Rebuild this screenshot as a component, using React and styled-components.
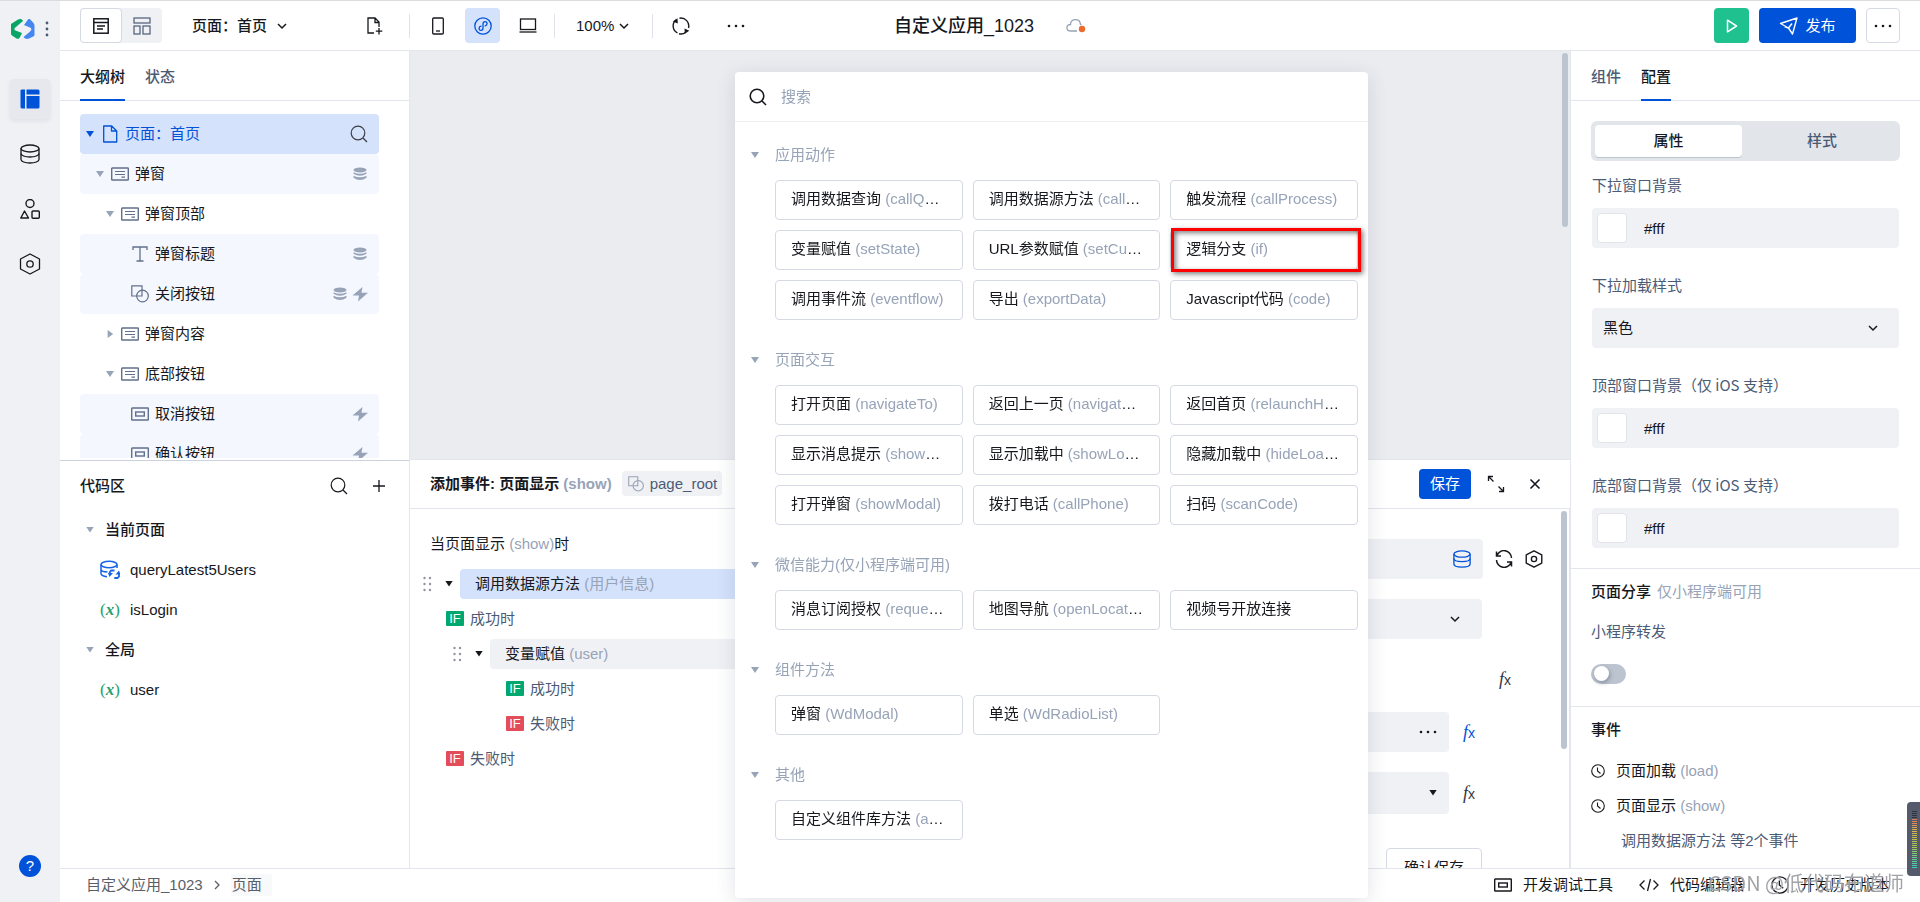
import React from "react";
import styled, { createGlobalStyle } from "styled-components";

const c = {
  blue: "#0052d9",
  blueSoft: "#d4e2fc",
  ink: "#16181d",
  slate: "#4b5b76",
  muted: "#97a3b7",
  field: "#f0f1f5",
  line: "#e3e6ec",
  outline: "#d5d9e3",
  thumb: "#bcc4d0",
  green: "#00a870",
  red: "#e34d59",
};

const Global = createGlobalStyle`
  *, *::before, *::after { box-sizing: border-box; }
  body {
    margin: 0;
    background: #fff;
    color: ${c.ink};
    font: 15px/20px "Liberation Sans", "Noto Sans CJK SC", sans-serif;
    overflow: hidden;
  }
  button, input, select { font: inherit; color: inherit; }
  button { background: none; border: 0; padding: 0; cursor: pointer; }
  svg { display: block; flex: none; }
`;

/* ---------- icons ---------- */

const Svg = ({ w = 18, h, box, sw = 1.2, children, ...rest }) => (
  <svg
    width={w}
    height={h || w}
    viewBox={box || `0 0 ${w} ${h || w}`}
    fill="none"
    stroke="currentColor"
    strokeWidth={sw}
    aria-hidden="true"
    {...rest}
  >
    {children}
  </svg>
);

const Logo = () => (
  <Svg w={24} h={20} stroke="none">
    <path d="M0 5 7 .6c2-1 4-.6 5 1.400L5.500 7.500c-2 1.500-3 3-1 4L11 14l-2.500 5c-1 1-2 1-3 .5L1 16.500c-1-.8-1-1.500-1-2.500z" fill="#07a566" />
    <path d="M13 6l4-5.500c1-.8 2-.6 2.800.4L22.500 4c.8 1 1 2 1 3v8.500c0 1-.4 1.500-1.200 2L18 19.500c-2 .8-4 .4-5.500-1.500l6-5c2-1.500 2.500-3 1-4.200z" fill="#4687ef" />
  </Svg>
);
const VDots = () => (
  <Svg w={4} h={16} stroke="none" fill="#4b5b76">
    <circle cx="2" cy="2" r="1.400" /><circle cx="2" cy="8" r="1.400" /><circle cx="2" cy="14" r="1.400" />
  </Svg>
);
const LayoutIcon = () => (
  <Svg w={20} stroke="none" fill={c.blue}>
    <path d="M1.500 .5H5v19H2a1.500 1.500 0 0 1-1.500-1.500V1.500z" />
    <path d="M6.500.5H18a1.500 1.500 0 0 1 1.500 1.500v3.500h-13z" />
    <path d="M6.500 7h13v11a1.500 1.500 0 0 1-1.500 1.500H6.500z" />
  </Svg>
);
const Database = ({ w = 20 }) => (
  <Svg w={w} box="0 0 20 20" sw={20 / w * 1.3}>
    <ellipse cx="10" cy="4.500" rx="9" ry="3.500" />
    <path d="M1 4.500V15.500C1 17.500 5 19 10 19s9-1.500 9-3.500V4.500" />
    <path d="M1 9.500c0 2 4 3.500 9 3.500s9-1.500 9-3.500" />
  </Svg>
);
const Shapes = () => (
  <Svg w={20} h={20} sw={1.400}>
    <circle cx="10" cy="4.500" r="4" />
    <path d="M4.500 12 8.500 19H.8z" strokeLinejoin="round" />
    <rect x="12" y="12" width="7.300" height="7.300" rx="1" />
  </Svg>
);
const Hexagon = ({ w = 22, sw = 1.3, r = 3.2 }) => (
  <Svg w={w} box="0 0 22 22" sw={sw}>
    <path d="M11 1 20.500 6v10L11 21l-9.500-5V6z" strokeLinejoin="round" />
    <circle cx="11" cy="11" r={r} />
  </Svg>
);
const ListIcon = () => (
  <Svg w={16} h={16} sw={1.500}>
    <rect x=".8" y=".8" width="14.400" height="14.400" />
    <path d="M1 4.500h14M4 8h8M4 11h6" />
  </Svg>
);
const BlocksIcon = () => (
  <Svg w={18}>
    <rect x="1" y="1" width="16" height="5" /><rect x="1" y="9" width="6" height="8" /><rect x="10" y="9" width="7" height="8" />
  </Svg>
);
const Chevron = ({ w = 10 }) => (
  <Svg w={w} box="0 0 10 10" sw={1.500}><path d="M1 3l4 4 4-4" /></Svg>
);
const NewFile = () => (
  <Svg w={18} sw={1.300}>
    <path d="M8 16H2V1h7l4 4v5M9 1v4.500h4M13 11v6.500M9.800 14.200h6.500" />
  </Svg>
);
const Phone = () => (
  <Svg w={12} h={18} sw={1.300}><rect x=".7" y="1" width="10.600" height="16" rx="1" /><path d="M4 14h4" /></Svg>
);
const Mini = () => (
  <Svg w={18} sw={1.300}>
    <circle cx="9" cy="9" r="8.200" />
    <path d="M7 9.200c-2.200.2-2.800 4.300 0 4.200 1.500-.1 2-1 2-2.400V7c0-1.600.8-2.400 2-2.400 2.900 0 2.500 3.900.2 4.200" strokeLinecap="round" />
  </Svg>
);
const Laptop = () => (
  <Svg w={18} h={16} sw={1.300}><rect x="1.500" y="1" width="15" height="10.500" /><path d="M.5 14h17" /></Svg>
);
const Rotate = () => (
  <Svg w={18} sw={1.400}>
    <path d="M5.500 16A7.900 7.900 0 0 1 4.500 2.500M7.500 1.200A7.900 7.900 0 0 1 16.500 11M14 15A7.900 7.900 0 0 1 7 16.800" />
    <path d="M5.800 6.500 5.500 1.200.8 4.500zM12.500 11.500l.3 5.300 4.500-3z" fill="currentColor" stroke="none" />
  </Svg>
);
const Dots = () => (
  <Svg w={18} h={4} stroke="none" fill="currentColor">
    <circle cx="2" cy="2" r="1.300" /><circle cx="9" cy="2" r="1.300" /><circle cx="16" cy="2" r="1.300" />
  </Svg>
);
const Cloud = () => (
  <Svg w={20} h={16} stroke={c.muted} sw={1.300}>
    <path d="M11 13H5C-.5 13-.4 6.500 4.500 6.500 4.500 0 14 0 14.500 6.500h1" />
    <circle cx="16" cy="11" r="3.200" fill="#ed6b2f" stroke="none" />
  </Svg>
);
const Play = () => (
  <Svg w={12} h={14} sw={1.500}><path d="M1.500 1.200 10.500 7l-9 5.800z" strokeLinejoin="round" /></Svg>
);
const Plane = () => (
  <Svg w={20} h={18} sw={1.400}>
    <path d="M1.500 6.500 18 1l-4.500 16-4-6zM9.500 11l3.500-4.500M9.500 11 5.500 9.500" strokeLinejoin="round" />
  </Svg>
);
const Search = ({ w = 18, sw = 1.400 }) => (
  <Svg w={w} box="0 0 18 18" sw={sw}><circle cx="8" cy="8" r="6.800" /><path d="M13 13l4 4" /></Svg>
);
const Doc = () => (
  <Svg w={18} sw={1.300}><path d="M2.700 1h8l5 5v11h-13zM10.500 1v5h5" strokeLinejoin="round" /></Svg>
);
const Card = () => (
  <Svg w={18} h={14} sw={1.400}>
    <rect x=".7" y="1" width="16.600" height="12" rx=".5" />
    <path d="M4 4.500h10M4 7.500h10M10.500 10.200H14" strokeWidth="1.200" />
  </Svg>
);
const Tee = () => (
  <Svg w={18} h={16} sw={1.300}><path d="M2 4V1h14v3M9 1v14M5.500 15h7" /></Svg>
);
const Overlap = ({ w = 18 }) => (
  <Svg w={w} box="0 0 18 18" sw={1.200}><path d="M7 11H.8V.8H11V6" /><circle cx="11.500" cy="11" r="5.800" /><path d="M7 11h4V6" /></Svg>
);
const Btn = () => (
  <Svg w={18} h={14} sw={1.400}><rect x=".7" y="1" width="16.600" height="12" rx=".5" /><rect x="4.700" y="5" width="8.600" height="4" /></Svg>
);
const Stack = () => (
  <Svg w={16} stroke="none" fill={c.muted}>
    <ellipse cx="8" cy="4" rx="6.500" ry="2.500" />
    <path d="M1.500 6.200q6.500 3 13 0v1.600q-6.500 4-13 0zM1.500 9.800q6.500 3 13 0v2q-6.500 4.400-13 0z" />
  </Svg>
);
const Bolt = () => (
  <Svg w={16} stroke="none" fill={c.muted}><path d="M10.500 1 .5 9.500H7L6 15.500l10-8.800H9.500z" /></Svg>
);
const Plus = () => <Svg w={12} sw={1.300}><path d="M6 0v12M0 6h12" /></Svg>;
const Query = () => (
  <Svg w={20} stroke="#1763e6" sw={1.500}>
    <ellipse cx="9" cy="4.500" rx="8" ry="3.200" />
    <path d="M1 4.500v9c0 1.500 2 2.700 6 3.200M17 4.500V8M1 9c0 1.800 3 3 6.500 3" />
    <path d="M9.800 14.500v-2.300l1.500-1.700h3.200M19 13.500v3L17.500 18h-3.200" strokeWidth="1.800" />
    <path d="M8 13h5l-3.500 4zM20.500 14.500h-5l3.500-4z" fill="#1763e6" stroke="none" />
  </Svg>
);
const Expand = () => (
  <Svg w={18} sw={1.300}><path d="M1.500 6V1.500H6M1.500 1.500l5 5M16.500 12v4.500H12M16.500 16.500l-5-5" /></Svg>
);
const Close = () => <Svg w={12} sw={1.600}><path d="M1.500 1.500l9 9M10.500 1.500l-9 9" /></Svg>;
const Sync = () => (
  <Svg w={18} sw={1.500}>
    <path d="M1.500 1.500V6H6M1.800 6A7.500 7.500 0 0 1 16.500 8M16.500 16.500V12H12M16.200 12A7.500 7.500 0 0 1 1.500 10" />
  </Svg>
);
const Clock = ({ w = 14 }) => (
  <Svg w={w} box="0 0 14 14" sw={1.100}><circle cx="7" cy="7" r="6.300" /><path d="M6.500 3.500V7l3 2.500" /></Svg>
);
const Code = () => (
  <Svg w={20} h={14} sw={1.300}><path d="M5.500 2.500 1 7l4.500 4.500M14.500 2.500 19 7l-4.500 4.500M11.500 1l-3 12" /></Svg>
);
const Grip = () => (
  <Svg w={9} h={16} stroke="none" fill="#8f949e">
    {[2, 8, 14].map((y) => (
      <React.Fragment key={y}><circle cx="1.500" cy={y} r="1.200" /><circle cx="7" cy={y} r="1.200" /></React.Fragment>
    ))}
  </Svg>
);
const Right = () => <Svg w={8} h={10} sw={1.300}><path d="M2 1l4 4-4 4" /></Svg>;

const Caret = styled.span`
  flex: none;
  width: 8px;
  height: 6px;
  background: ${(p) => p.$color || c.muted};
  clip-path: polygon(0 0, 100% 0, 50% 100%);
  visibility: ${(p) => (p.$hidden ? "hidden" : "visible")};
  ${(p) => p.$closed && "height: 8px; clip-path: polygon(20% 0, 90% 50%, 20% 100%);"}
`;

/* ---------- frame ---------- */

const Page = styled.div`
  display: grid;
  grid-template-columns: 60px minmax(0, 1fr);
  height: 100vh;
  border-top: 1px solid #dcdcdc;
`;
const Rail = styled.nav`
  display: flex;
  flex-direction: column;
  align-items: center;
  background: ${c.field};
  padding: 18px 0 25px;
`;
const Brand = styled.div`
  display: flex;
  align-items: center;
  gap: 10px;
  height: 20px;
  margin-bottom: 40px;
`;
const RailButton = styled.button`
  display: grid;
  place-items: center;
  width: 40px;
  height: 40px;
  margin-bottom: 15px;
  border-radius: 4px;
  background: ${(p) => (p.$on ? "#e6e8ed" : "transparent")};
  box-shadow: ${(p) => (p.$on ? "0 2px 4px rgba(30, 40, 60, .08)" : "none")};
`;
const Help = styled.button`
  margin-top: auto;
  width: 22px;
  height: 22px;
  border-radius: 50%;
  background: ${c.blue};
  color: #fff;
`;
const Main = styled.div`
  display: grid;
  grid-template-rows: 50px minmax(0, 1fr) 34px;
  min-width: 0;
  min-height: 0;
`;
const Header = styled.header`
  display: grid;
  grid-template-columns: 1fr auto 1fr;
  align-items: center;
  padding: 0 20px;
  border-bottom: 1px solid ${c.line};
`;
const Group = styled.div`
  display: flex;
  align-items: center;
  gap: ${(p) => p.$gap || 0}px;
  justify-content: ${(p) => (p.$end ? "flex-end" : "flex-start")};
`;
const Views = styled.div`
  display: flex;
  background: ${c.field};
  border-radius: 4px;
  margin-right: 30px;
`;
const View = styled.button`
  display: grid;
  place-items: center;
  width: ${(p) => (p.$on ? 42 : 40)}px;
  height: 35px;
  border-radius: 4px;
  color: ${(p) => (p.$on ? c.ink : c.slate)};
  ${(p) => p.$on && `background: #fff; border: 1px solid ${c.outline};`}
`;
const Pick = styled.button`
  display: flex;
  align-items: center;
  gap: ${(p) => p.$gap}px;
  font-weight: ${(p) => (p.$strong ? 500 : 400)};
`;
const Tool = styled.button`
  display: grid;
  place-items: center;
  width: 35px;
  height: 35px;
  border-radius: 4px;
  color: ${(p) => (p.$on ? c.blue : c.ink)};
  background: ${(p) => (p.$on ? c.blueSoft : "transparent")};
`;
const NewPage = styled(Tool)`
  margin: 0 17px 0 70px;
`;
const Devices = styled.div`
  display: flex;
  gap: 10px;
  padding: 0 9px 0 10px;
`;
const Zoom = styled.div`
  padding: 0 23px 0 21px;
`;
const Extras = styled.div`
  display: flex;
  gap: 20px;
  padding-left: 10px;
`;
const Rule = styled.span`
  width: 1px;
  height: 24px;
  background: #dfe2e9;
`;
const Title = styled.h1`
  margin: 0;
  font-size: 18px;
  line-height: 24px;
  font-weight: 500;
`;
const Solid = styled.button`
  display: flex;
  align-items: center;
  justify-content: center;
  gap: 6px;
  height: ${(p) => p.$h || 35}px;
  width: ${(p) => p.$w}px;
  border-radius: 4px;
  color: #fff;
  background: ${(p) => p.$bg || c.blue};
`;
const More = styled.button`
  display: grid;
  place-items: center;
  width: 34px;
  height: 35px;
  border: 1px solid ${c.outline};
  border-radius: 4px;
`;
const Columns = styled.div`
  display: grid;
  grid-template-columns: 350px minmax(0, 1fr) 350px;
  min-height: 0;
`;

/* ---------- shared panel parts ---------- */

const Side = styled.section`
  display: flex;
  flex-direction: column;
  min-height: 0;
  overflow: hidden;
  ${(p) => (p.$right ? `border-left: 1px solid ${c.line};` : `border-right: 1px solid ${c.line};`)}
`;
const Tabs = styled.div`
  display: flex;
  flex: none;
  gap: 20px;
  height: 50px;
  padding: 0 20px;
  border-bottom: 1px solid ${c.line};
`;
const Tab = styled.button`
  height: 50px;
  padding-top: 4px;
  font-weight: 500;
  color: ${(p) => (p.$on ? c.ink : c.slate)};
  border-bottom: 2px solid ${(p) => (p.$on ? c.blue : "transparent")};
`;
const Muted = styled.span`
  color: ${c.muted};
`;
const Thumb = styled.span`
  position: absolute;
  right: 2px;
  top: 2px;
  width: 6px;
  height: ${(p) => p.$h};
  border-radius: 3px;
  background: ${c.thumb};
`;

/* ---------- left ---------- */

const Tree = styled.div`
  flex: 1;
  min-height: 0;
  overflow: hidden;
  padding: 13px 30px 0 20px;
  margin-bottom: 2px;
`;
const TreeRow = styled.button`
  display: flex;
  align-items: center;
  width: 100%;
  height: 40px;
  padding: 0 11px 0 ${(p) => 6 + p.$level * 10}px;
  border-radius: 4px;
  background: ${(p) => (p.$root ? c.blueSoft : p.$tint ? "#f4f7fe" : "transparent")};
  color: ${(p) => (p.$root ? c.blue : c.ink)};
`;
const TreeIcon = styled.span`
  display: grid;
  place-items: center;
  width: 18px;
  margin: 0 6px 0 7px;
  color: ${(p) => (p.$root ? c.blue : "#62708a")};
`;
const Trail = styled.span`
  display: flex;
  gap: 4px;
  margin-left: auto;
  color: #3a3e46;
`;
const CodeArea = styled.div`
  flex: none;
  height: 50%;
  border-top: 1px solid #ccd2de;
`;
const CodeHead = styled.div`
  display: flex;
  align-items: center;
  height: 49px;
  padding: 2px 24px 0 20px;
`;
const Heading = styled.h2`
  margin: 0;
  margin-right: auto;
  font-size: 15px;
  font-weight: 500;
`;
const CodeRow = styled.button`
  display: flex;
  align-items: center;
  gap: ${(p) => (p.$group ? 11 : 10)}px;
  width: 100%;
  height: 40px;
  padding-left: ${(p) => (p.$group ? 26 : 40)}px;
  font-weight: ${(p) => (p.$group ? 500 : 400)};
`;
const VarMark = styled.span`
  width: 20px;
  text-align: center;
  color: #2a9f6c;
  font: 17px/20px "Liberation Serif", serif;
  white-space: nowrap;
  em { font-weight: 700; }
`;

const treeRows = [
  { level: 0, icon: <Doc />, text: "页面：首页", root: true, trail: <Search sw={1.200} /> },
  { level: 1, icon: <Card />, text: "弹窗", tint: true, trail: <Stack /> },
  { level: 2, icon: <Card />, text: "弹窗顶部" },
  { level: 3, icon: <Tee />, text: "弹窗标题", tint: true, leaf: true, trail: <Stack /> },
  { level: 3, icon: <Overlap />, text: "关闭按钮", tint: true, leaf: true, trail: <><Stack /><Bolt /></> },
  { level: 2, icon: <Card />, text: "弹窗内容", closed: true },
  { level: 2, icon: <Card />, text: "底部按钮" },
  { level: 3, icon: <Btn />, text: "取消按钮", tint: true, leaf: true, trail: <Bolt /> },
  { level: 3, icon: <Btn />, text: "确认按钮", tint: true, leaf: true, trail: <Bolt /> },
];

const Variable = () => <VarMark>(<em>x</em>)</VarMark>;

const LeftPanel = () => (
  <Side>
    <Tabs><Tab $on>大纲树</Tab><Tab>状态</Tab></Tabs>
    <Tree>
      {treeRows.map((r) => (
        <TreeRow key={r.text} $level={r.level} $root={r.root} $tint={r.tint}>
          <Caret $hidden={r.leaf} $closed={r.closed} $color={r.root ? c.blue : undefined} />
          <TreeIcon $root={r.root}>{r.icon}</TreeIcon>
          {r.text}
          <Trail>{r.trail}</Trail>
        </TreeRow>
      ))}
    </Tree>
    <CodeArea>
      <CodeHead>
        <Heading>代码区</Heading>
        <Group $gap={25}>
          <button aria-label="搜索代码"><Search sw={1.200} /></button>
          <button aria-label="新增"><Plus /></button>
        </Group>
      </CodeHead>
      <CodeRow $group><Caret />当前页面</CodeRow>
      <CodeRow><Query />queryLatest5Users</CodeRow>
      <CodeRow><Variable />isLogin</CodeRow>
      <CodeRow $group><Caret />全局</CodeRow>
      <CodeRow><Variable />user</CodeRow>
    </CodeArea>
  </Side>
);

/* ---------- center ---------- */

const Center = styled.section`
  display: flex;
  flex-direction: column;
  min-height: 0;
`;
const Canvas = styled.div`
  position: relative;
  flex: 1;
  background: #ebecf0;
`;
const EventPanel = styled.div`
  display: flex;
  flex: none;
  flex-direction: column;
  height: calc(50% + 1px);
  min-height: 0;
  border-top: 1px solid ${c.line};
`;
const EventHead = styled.div`
  display: flex;
  flex: none;
  align-items: center;
  height: 49px;
  padding: 0 29px 0 20px;
  border-bottom: 1px solid ${c.line};
`;
const EventTitle = styled.h2`
  margin: 0 10px 0 0;
  font-size: 15px;
  font-weight: 700;
`;
const EventTools = styled.div`
  display: flex;
  align-items: center;
  gap: 16px;
  margin-left: auto;
  > :last-child { margin-left: 8px; }
`;
const Tag = styled.span`
  display: flex;
  align-items: center;
  gap: 6px;
  height: 25px;
  padding: 0 5px 0 6px;
  border-radius: 4px;
  background: ${c.field};
  color: ${c.slate};
  svg { color: ${c.muted}; }
`;
const EventBody = styled.div`
  position: relative;
  display: grid;
  grid-template-columns: minmax(0, 1fr) 500px;
  flex: 1;
  min-height: 0;
  overflow: hidden;
  border-right: 1px solid ${c.line};
`;
const Flow = styled.div`
  display: flex;
  flex-direction: column;
  gap: 5px;
  padding: 20px 20px 0 0;
`;
const FlowTitle = styled.div`
  height: 30px;
  padding-left: 20px;
  margin-bottom: 5px;
  line-height: 30px;
`;
const FlowRow = styled.div`
  display: flex;
  align-items: center;
  height: 30px;
  padding-left: ${(p) => p.$pad}px;
  color: ${c.slate};
`;
const FlowBar = styled.button`
  flex: 1;
  height: 30px;
  padding-left: 15px;
  border-radius: 4px;
  text-align: left;
  color: ${c.ink};
  background: ${(p) => (p.$on ? c.blueSoft : c.field)};
`;
const FlowCaret = styled.span`
  display: flex;
  margin: 0 7px 0 13px;
`;
const If = styled.span`
  display: grid;
  place-items: center;
  width: 18px;
  height: 15px;
  margin-right: 6px;
  border-radius: 1px;
  color: #fff;
  font-size: 13px;
  line-height: 15px;
  background: ${(p) => (p.$ok ? c.green : c.red)};
`;
const Form = styled.div`
  display: flex;
  flex-direction: column;
  padding: 10px 26px 0 0;
`;
const FormRow = styled.div`
  display: flex;
  align-items: center;
  gap: 12px;
  flex: none;
  height: ${(p) => p.$h || 40}px;
  margin-top: ${(p) => p.$top || 20}px;
  padding-right: ${(p) => p.$right || 0}px;
  color: ${c.ink};
`;
const FormField = styled.button`
  display: flex;
  align-items: center;
  justify-content: flex-end;
  flex: 1;
  height: 100%;
  padding-right: ${(p) => p.$pr || 12}px;
  border-radius: 4px;
  background: ${c.field};
  color: ${(p) => (p.$blue ? c.blue : c.ink)};
`;
const FxButton = styled.button`
  width: 16px;
  height: 20px;
  color: ${(p) => (p.$on ? c.blue : "#33373f")};
  font: italic 18px/20px "Liberation Serif", serif;
  white-space: nowrap;
  small { font: 14px/20px "Liberation Sans", sans-serif; }
`;
const Outline = styled.button`
  width: 96px;
  height: 40px;
  margin-left: auto;
  border: 1px solid ${c.outline};
  border-radius: 4px;
`;
const FormSpace = styled.span`
  flex: 1;
`;
const Fx = (p) => <FxButton aria-label="表达式" {...p}>f<small>x</small></FxButton>;

const CenterPanel = () => (
  <Center>
    <Canvas><Thumb $h="174px" /></Canvas>
    <EventPanel>
      <EventHead>
        <EventTitle>添加事件: 页面显示 <Muted>(show)</Muted></EventTitle>
        <Tag><Overlap w={16} />page_root</Tag>
        <EventTools>
          <Solid $w={52} $h={30}>保存</Solid>
          <button aria-label="展开"><Expand /></button>
          <button aria-label="关闭"><Close /></button>
        </EventTools>
      </EventHead>
      <EventBody>
        <Flow>
          <FlowTitle>当页面显示 <Muted>(show)</Muted>时</FlowTitle>
          <FlowRow $pad={13}><Grip /><FlowCaret><Caret $color={c.ink} /></FlowCaret><FlowBar $on>调用数据源方法 <Muted>(用户信息)</Muted></FlowBar></FlowRow>
          <FlowRow $pad={36}><If $ok>IF</If>成功时</FlowRow>
          <FlowRow $pad={43}><Grip /><FlowCaret><Caret $color={c.ink} /></FlowCaret><FlowBar>变量赋值 <Muted>(user)</Muted></FlowBar></FlowRow>
          <FlowRow $pad={96}><If $ok>IF</If>成功时</FlowRow>
          <FlowRow $pad={96}><If>IF</If>失败时</FlowRow>
          <FlowRow $pad={36}><If>IF</If>失败时</FlowRow>
        </Flow>
        <Form>
          <FormRow><FormField $blue aria-label="数据源"><Database w={18} /></FormField><Sync /><Hexagon w={18} sw={1.700} /></FormRow>
          <FormRow $right={61}><FormField aria-label="方法" $pr={22}><Chevron /></FormField></FormRow>
          <FormRow $right={30}><FormSpace /><Fx /></FormRow>
          <FormRow $right={66} $top={13}><FormField aria-label="参数"><Dots /></FormField><Fx $on /></FormRow>
          <FormRow $right={66} $h={42}><FormField aria-label="取值"><Caret $color={c.ink} /></FormField><Fx /></FormRow>
          <FormRow $right={61} $top={34}><Outline>确认保存</Outline></FormRow>
        </Form>
        <Thumb $h="238px" />
      </EventBody>
    </EventPanel>
  </Center>
);

/* ---------- right ---------- */

const Props = styled.div`
  padding: 20px;
  border-bottom: 1px solid ${c.line};
`;
const Segments = styled.div`
  display: grid;
  grid-template-columns: 147px 1fr;
  column-gap: 6px;
  height: 40px;
  padding: 4px;
  border-radius: 6px;
  background: #e2e6eb;
`;
const Segment = styled.button`
  height: 32px;
  border-radius: 4px;
  font-weight: 500;
  color: ${(p) => (p.$on ? c.ink : c.slate)};
  ${(p) => p.$on && "background: #fff; box-shadow: 0 1px 0 #bcc4d0;"}
`;
const Field = styled.div`
  padding: 9px 1px 13px;
  &:last-child { padding-bottom: 0; }
`;
const Label = styled.label`
  display: block;
  height: 38px;
  line-height: 30px;
  color: ${c.slate};
  font-family: "Noto Sans CJK SC", sans-serif;
`;
const Control = styled.div`
  display: flex;
  align-items: center;
  height: 40px;
  padding: 5px;
  border-radius: 4px;
  background: ${c.field};
`;
const Swatch = styled.button`
  width: 30px;
  height: 30px;
  border: 1px solid #e2e4ea;
  border-radius: 4px;
  background: #fff;
`;
const TextInput = styled.input`
  flex: 1;
  min-width: 0;
  height: 30px;
  padding: 0 17px;
  border: 0;
  outline: 0;
  background: transparent;
`;
const Select = styled.select`
  flex: 1;
  height: 30px;
  padding: 0 6px;
  border: 0;
  outline: 0;
  appearance: none;
  background: transparent;
`;
const SelectMark = styled.span`
  padding-right: 16px;
  pointer-events: none;
`;
const Share = styled.div`
  padding: 13px 20px 22px;
  border-bottom: 1px solid ${c.line};
`;
const Line = styled.div`
  display: flex;
  align-items: center;
  gap: 6px;
  height: 20px;
  font-weight: ${(p) => (p.$strong ? 500 : 400)};
  ${Muted} { font-weight: 400; }
`;
const ShareLabel = styled.label`
  display: block;
  margin: 20px 0 22px;
  color: ${c.slate};
`;
const Toggle = styled.input`
  display: block;
  appearance: none;
  width: 35px;
  height: 20px;
  margin: 0;
  padding: 2px 3px;
  border-radius: 10px;
  background: ${c.thumb};
  &::before {
    content: "";
    display: block;
    width: 15px;
    height: 15px;
    border-radius: 50%;
    background: #fff;
    box-shadow: 1px 2px 4px rgba(40, 50, 70, .35);
  }
`;
const Events = styled.div`
  padding: 13px 20px;
`;
const EventList = styled.div`
  padding-top: 13px;
`;
const EventItem = styled.button`
  display: flex;
  align-items: center;
  gap: 11px;
  height: 35px;
  width: 100%;
  white-space: pre;
`;
const EventNote = styled.div`
  height: 35px;
  padding-left: 30px;
  line-height: 35px;
  color: ${c.slate};
`;

const ColorField = ({ id, label }) => (
  <Field>
    <Label htmlFor={id}>{label}</Label>
    <Control><Swatch aria-label={label} /><TextInput id={id} defaultValue="#fff" /></Control>
  </Field>
);

const RightPanel = () => (
  <Side $right>
    <Tabs><Tab>组件</Tab><Tab $on>配置</Tab></Tabs>
    <Props>
      <Segments><Segment $on>属性</Segment><Segment>样式</Segment></Segments>
      <ColorField id="pull-bg" label="下拉窗口背景" />
      <Field>
        <Label htmlFor="pull-style">下拉加载样式</Label>
        <Control>
          <Select id="pull-style"><option>黑色</option></Select>
          <SelectMark><Chevron /></SelectMark>
        </Control>
      </Field>
      <ColorField id="top-bg" label="顶部窗口背景（仅 iOS 支持）" />
      <ColorField id="bottom-bg" label="底部窗口背景（仅 iOS 支持）" />
    </Props>
    <Share>
      <Line $strong>页面分享 <Muted>仅小程序端可用</Muted></Line>
      <ShareLabel htmlFor="forward">小程序转发</ShareLabel>
      <Toggle id="forward" type="checkbox" role="switch" />
    </Share>
    <Events>
      <Line $strong>事件</Line>
      <EventList>
        <EventItem><Clock /><span>页面加载 <Muted>(load)</Muted></span></EventItem>
        <EventItem><Clock /><span>页面显示 <Muted>(show)</Muted></span></EventItem>
        <EventNote>调用数据源方法 等2个事件</EventNote>
      </EventList>
    </Events>
  </Side>
);

/* ---------- footer ---------- */

const Footer = styled.footer`
  display: flex;
  align-items: center;
  justify-content: space-between;
  padding: 0 30px 2px 26px;
  border-top: 1px solid ${c.line};
`;
const Crumbs = styled.div`
  display: flex;
  align-items: center;
  gap: 10px;
  color: #5a5e66;
`;
const Crumb = styled.a`
  color: inherit;
  text-decoration: none;
  ${(p) => p.$last && "padding: 1px 10px 1px 1px; background: #f8f9fb;"}
`;
const FootButton = styled.button`
  display: flex;
  align-items: center;
  gap: 11px;
`;

/* ---------- action picker ---------- */

const Picker = styled.div`
  position: fixed;
  top: 72px;
  bottom: 4px;
  left: 735px;
  width: 633px;
  overflow: hidden;
  border-radius: 4px;
  background: #fff;
  box-shadow: 0 4px 20px rgba(40, 50, 80, .14);
`;
const SearchBar = styled.label`
  display: flex;
  align-items: center;
  gap: 14px;
  height: 50px;
  padding: 0 14px;
  border-bottom: 1px solid #ebedf1;
  input {
    flex: 1;
    border: 0;
    outline: 0;
    padding: 0;
    background: transparent;
  }
  input::placeholder { color: ${c.muted}; opacity: 1; }
`;
const PickerBody = styled.div`
  display: flex;
  flex-direction: column;
  gap: 15px;
  padding: 8px 10px 0 16px;
`;
const PickHead = styled.button`
  display: flex;
  align-items: center;
  gap: 16px;
  height: 50px;
  color: ${c.muted};
`;
const PickGrid = styled.div`
  display: grid;
  grid-template-columns: repeat(3, minmax(0, 1fr));
  gap: 10px;
  padding-left: 24px;
`;
const Action = styled.button`
  position: relative;
  height: 40px;
  padding: 0 15px;
  border: 1px solid ${c.outline};
  border-radius: 4px;
  text-align: left;
`;
const ActionText = styled.span`
  display: block;
  overflow: hidden;
  padding-bottom: 2px;
  text-overflow: ellipsis;
  white-space: nowrap;
`;
const Callout = styled.span`
  position: absolute;
  inset: -3px -4px -3px 0;
  border: 3px solid #f00;
  box-shadow: 2px 2px 5px rgba(0, 0, 0, .5), inset 2px 2px 5px rgba(0, 0, 0, .5);
`;

const sections = [
  ["应用动作", [
    ["调用数据查询", "callQuery"], ["调用数据源方法", "callDataSource"], ["触发流程", "callProcess"],
    ["变量赋值", "setState"], ["URL参数赋值", "setCurrentQuery"], ["逻辑分支", "if"],
    ["调用事件流", "eventflow"], ["导出", "exportData"], ["Javascript代码", "code"],
  ]],
  ["页面交互", [
    ["打开页面", "navigateTo"], ["返回上一页", "navigateBack"], ["返回首页", "relaunchHome"],
    ["显示消息提示", "showToast"], ["显示加载中", "showLoading"], ["隐藏加载中", "hideLoading"],
    ["打开弹窗", "showModal"], ["拨打电话", "callPhone"], ["扫码", "scanCode"],
  ]],
  ["微信能力(仅小程序端可用)", [
    ["消息订阅授权", "requestSubscribe"], ["地图导航", "openLocation"], ["视频号开放连接"],
  ]],
  ["组件方法", [["弹窗", "WdModal"], ["单选", "WdRadioList"]]],
  ["其他", [["自定义组件库方法", "action"]]],
];

const ActionPicker = () => (
  <Picker role="dialog" aria-label="选择动作">
    <SearchBar><Search sw={1.600} /><input placeholder="搜索" aria-label="搜索" /></SearchBar>
    <PickerBody>
      {sections.map(([name, items]) => (
        <div key={name}>
          <PickHead><Caret />{name}</PickHead>
          <PickGrid>
            {items.map(([text, key]) => (
              <Action key={text}>
                <ActionText>{text} {key && <Muted>({key})</Muted>}</ActionText>
                {key === "if" && <Callout />}
              </Action>
            ))}
          </PickGrid>
        </div>
      ))}
    </PickerBody>
  </Picker>
);

const Watermark = styled.div`
  position: fixed;
  right: 16px;
  bottom: 5px;
  color: rgba(110, 112, 116, .65);
  font: 20px/28px "Noto Sans CJK SC", sans-serif;
  text-shadow: 0 0 1px #fff;
  pointer-events: none;
`;
const Meter = styled.div`
  position: fixed;
  right: 0;
  bottom: 26px;
  width: 13px;
  height: 74px;
  padding: 9px 3px 8px 5px;
  border-radius: 4px 0 0 4px;
  background: #565b6b;
  &::before {
    content: "";
    display: block;
    height: 57px;
    background:
      repeating-linear-gradient(transparent 0 1px, #565b6b 1px 2px),
      linear-gradient(#2f3340 0 7px, #e0705a 7px, #d9b84c 20px, #a4cc54 36px, #35d0c0);
  }
`;

export default function App() {
  return (
    <>
      <Global />
      <Page>
        <Rail>
          <Brand><Logo /><VDots /></Brand>
          <RailButton $on aria-label="页面设计"><LayoutIcon /></RailButton>
          <RailButton aria-label="数据源"><Database /></RailButton>
          <RailButton aria-label="组件"><Shapes /></RailButton>
          <RailButton aria-label="设置"><Hexagon /></RailButton>
          <Help>?</Help>
        </Rail>
        <Main>
          <Header>
            <Group>
              <Views>
                <View $on aria-label="大纲视图"><ListIcon /></View>
                <View aria-label="布局视图"><BlocksIcon /></View>
              </Views>
              <Pick $gap={10} $strong>页面：首页<Chevron /></Pick>
              <NewPage aria-label="新建页面"><NewFile /></NewPage>
              <Rule />
              <Devices>
                <Tool aria-label="手机"><Phone /></Tool>
                <Tool $on aria-label="小程序"><Mini /></Tool>
                <Tool aria-label="电脑"><Laptop /></Tool>
              </Devices>
              <Rule />
              <Zoom><Pick $gap={5}>100%<Chevron /></Pick></Zoom>
              <Rule />
              <Extras>
                <Tool aria-label="刷新"><Rotate /></Tool>
                <Tool aria-label="更多"><Dots /></Tool>
              </Extras>
            </Group>
            <Group $gap={32}><Title>自定义应用_1023</Title><Cloud /></Group>
            <Group $end $gap={10}>
              <Solid $w={35} $bg="#1fc18f" aria-label="预览"><Play /></Solid>
              <Solid $w={97}><Plane />发布</Solid>
              <More aria-label="更多操作"><Dots /></More>
            </Group>
          </Header>
          <Columns>
            <LeftPanel />
            <CenterPanel />
            <RightPanel />
          </Columns>
          <Footer>
            <Crumbs>
              <Crumb href="#">自定义应用_1023</Crumb>
              <Right />
              <Crumb href="#" $last>页面</Crumb>
            </Crumbs>
            <Group $gap={26}>
              <FootButton><Btn />开发调试工具</FootButton>
              <FootButton><Code />代码编辑器</FootButton>
              <FootButton><Clock w={18} />开发历史版本</FootButton>
            </Group>
          </Footer>
        </Main>
      </Page>
      <ActionPicker />
      <Watermark>CSDN @低代码布道师</Watermark>
      <Meter />
    </>
  );
}
